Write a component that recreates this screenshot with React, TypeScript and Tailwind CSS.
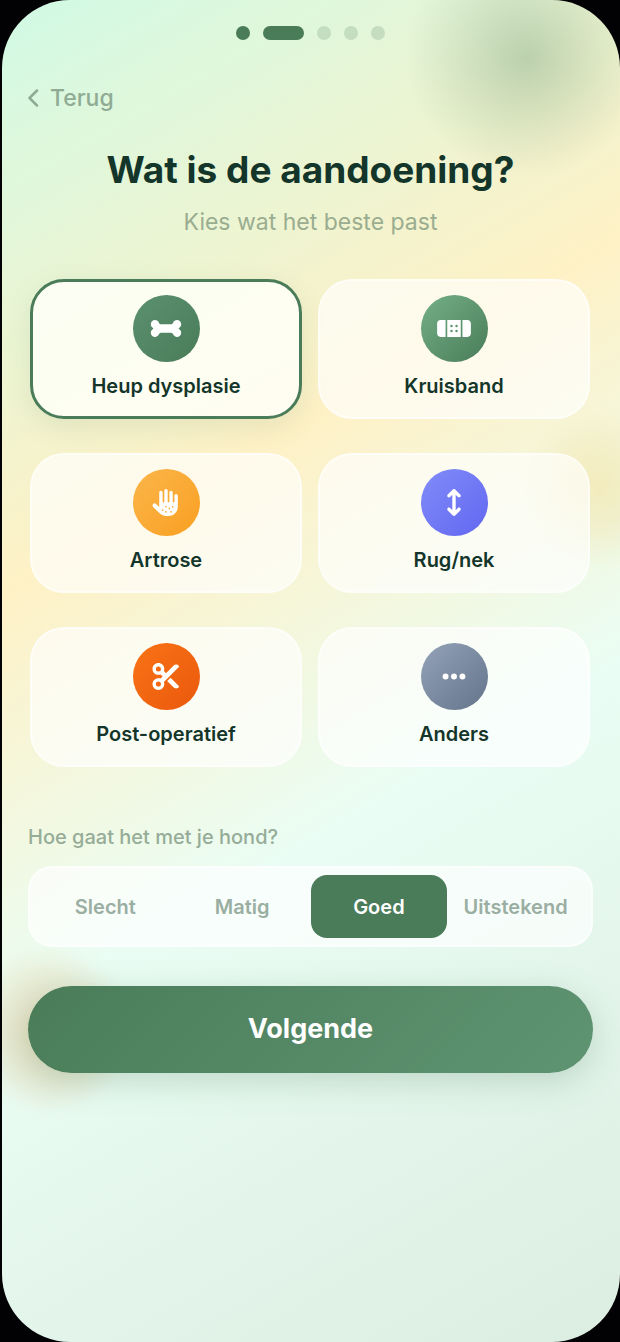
import React, { useState } from 'react';
import { FaArrowsUpDown, FaBandage, FaBone, FaEllipsis, FaHandDots, FaScissors } from 'react-icons/fa6';
import type { IconType } from 'react-icons';

interface Condition {
  id: string;
  label: string;
  icon: IconType;
  color: string;
}

const CONDITIONS: Condition[] = [
  { id: 'hip', label: 'Heup dysplasie', icon: FaBone, color: 'from-[#5b906f] to-[#4a7c59]' },
  { id: 'ligament', label: 'Kruisband', icon: FaBandage, color: 'from-[#74b088] to-[#4a7c59]' },
  { id: 'arthrosis', label: 'Artrose', icon: FaHandDots, color: 'from-[#fbb548] to-[#f9a01e]' },
  { id: 'back', label: 'Rug/nek', icon: FaArrowsUpDown, color: 'from-[#818cf8] to-[#6366f1]' },
  { id: 'surgery', label: 'Post-operatief', icon: FaScissors, color: 'from-[#f97316] to-[#ea580c]' },
  { id: 'other', label: 'Anders', icon: FaEllipsis, color: 'from-[#94a3b8] to-[#64748b]' },
];

const MOODS = ['Slecht', 'Matig', 'Goed', 'Uitstekend'];

const StepDots: React.FC = () => (
  <div className="flex justify-center gap-[13px]">
    <span className="h-[14px] w-[14px] rounded-full bg-[#4a7c59]"></span>
    <span className="h-[14px] w-[41px] rounded-full bg-[#4a7c59]"></span>
    <span className="h-[14px] w-[14px] rounded-full bg-[#4a7c59]/20"></span>
    <span className="h-[14px] w-[14px] rounded-full bg-[#4a7c59]/20"></span>
    <span className="h-[14px] w-[14px] rounded-full bg-[#4a7c59]/20"></span>
  </div>
);

const App: React.FC = () => {
  const [condition, setCondition] = useState('hip');
  const [mood, setMood] = useState('Goed');

  return (
    <div className="min-h-screen bg-[#020205] pl-0.5 font-['Inter',sans-serif]">
      <main className="relative min-h-screen overflow-hidden rounded-[68px] bg-[linear-gradient(150deg,#d1fae5_0%,#fef1c6_35%,#eafdf4_60%,#dcede1_100%)]">
        {/* Soft colour blobs */}
        <div className="absolute -top-[62px] -right-[26px] h-[240px] w-[240px] rounded-full bg-[radial-gradient(circle_closest-side,rgba(74,124,89,0.3)_0%,rgba(74,124,89,0.13)_55%,transparent_100%)]"></div>
        <div className="absolute top-[410px] -right-[60px] h-[160px] w-[160px] rounded-full bg-[radial-gradient(circle_closest-side,rgba(240,185,50,0.2)_0%,rgba(240,185,50,0.12)_50%,transparent_100%)] blur-[6px]"></div>
        <div className="absolute top-[945px] -left-[38px] h-[170px] w-[170px] rounded-full bg-[radial-gradient(circle_closest-side,rgba(220,165,90,0.4)_0%,rgba(220,165,90,0.18)_60%,transparent_100%)] blur-[6px]"></div>

        <div className="relative pt-[26px] pr-[27px] pb-10 pl-[26px]">
          <StepDots />

          <button type="button" className="mt-[40px] flex h-9 items-center gap-[10px] text-[23px] font-medium text-[#8fab94]">
            <svg className="h-[18px] w-3" viewBox="0 0 12 18" fill="none" stroke="currentColor" aria-hidden="true">
              <path strokeLinecap="round" strokeLinejoin="round" strokeWidth={2.5} d="M9 1.5L1.5 9L9 16.5" />
            </svg>
            Terug
          </button>

          <header className="mt-8 text-center">
            <h1 className="text-[37px] leading-[44px] font-bold text-[#14352a]">Wat is de aandoening?</h1>
            <p className="mt-[14px] text-[23px] leading-[32px] text-[#9aad90]">Kies wat het beste past</p>
          </header>

          <div className="mt-[41px] grid grid-cols-2 gap-x-4 gap-y-[34px] pr-[3px] pl-0.5">
            {CONDITIONS.map(({ id, label, icon: Icon, color }) => (
              <button
                key={id}
                type="button"
                aria-pressed={condition === id}
                onClick={() => setCondition(id)}
                className={`flex h-[140px] flex-col items-center rounded-[34px] ${
                  condition === id
                    ? 'border-[3px] border-[#4a7c59] bg-[#fffff8]/85 pt-[13px] shadow-[0_8px_28px_rgba(74,124,89,0.12)]'
                    : 'border-2 border-white/50 bg-white/65 pt-[14px]'
                }`}
              >
                <span className={`flex h-[67px] w-[67px] items-center justify-center rounded-full bg-linear-135 ${color}`}>
                  <Icon className="h-[27px] w-[34px] text-white" aria-hidden="true" />
                </span>
                <span className="mt-[10px] text-xl leading-[28px] font-semibold text-[#14352a]">{label}</span>
              </button>
            ))}
          </div>

          <section className="mt-[55px]">
            <h2 id="mood-label" className="text-xl leading-[30px] font-medium text-[#96ac98]">
              Hoe gaat het met je hond?
            </h2>
            <div
              role="group"
              aria-labelledby="mood-label"
              className="mt-[14px] grid grid-cols-4 rounded-[24px] border-2 border-white/50 bg-white/65 p-[7px]"
            >
              {MOODS.map((item) => (
                <button
                  key={item}
                  type="button"
                  aria-pressed={mood === item}
                  onClick={() => setMood(item)}
                  className={`h-[63px] rounded-[16px] text-xl font-semibold ${
                    mood === item ? 'bg-[#4a7c59] text-white' : 'text-[#9aaea2]'
                  }`}
                >
                  {item}
                </button>
              ))}
            </div>
          </section>

          <button
            type="button"
            className="mt-[39px] h-[87px] w-full rounded-full bg-linear-135 from-[#4a7c59] to-[#5f9472] text-[27px] font-bold text-white shadow-[0_8px_32px_rgba(74,124,89,0.25)]"
          >
            Volgende
          </button>
        </div>
      </main>
    </div>
  );
};

export default App;
